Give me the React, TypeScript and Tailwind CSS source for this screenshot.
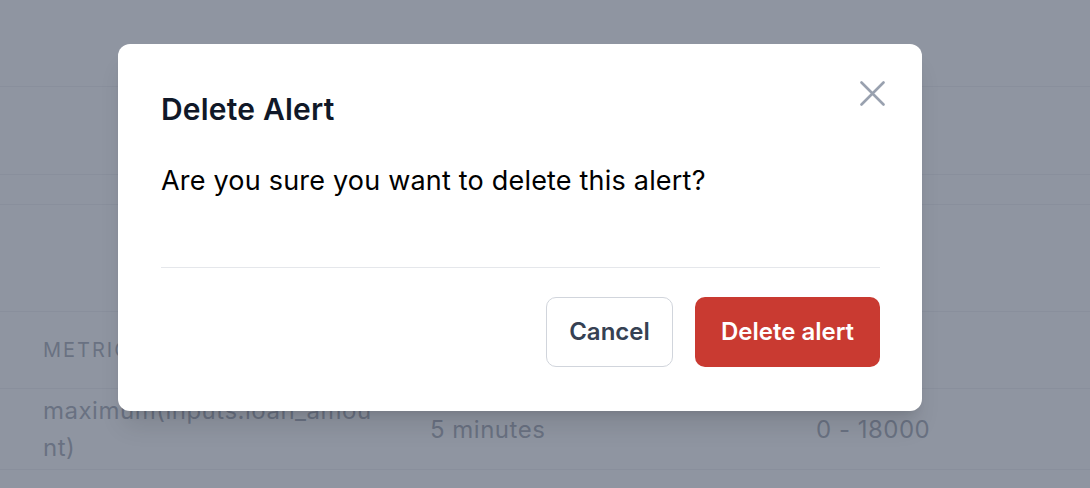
function BackgroundPage() {
  return (
    <div className="flex flex-col">
      <div className="h-[87px] border-b border-gray-200" />
      <div className="h-[88px] border-b border-gray-200" />
      <div className="h-[30px] border-b border-gray-200" />
      <div className="h-[107px] border-b border-gray-200" />
      <div className="h-[77px] border-b border-gray-200 flex items-center px-[43px]">
        <span className="text-[20px] uppercase tracking-[0.1em] text-gray-500">Metric</span>
      </div>
      <div className="h-[81px] border-b border-gray-200 flex items-center px-[43px] text-[24px] leading-[37px] tracking-[0.5px] text-gray-500">
        <div className="w-[387px] pr-[54px] break-all">maximum(inputs.loan_amount)</div>
        <div className="w-[386px]">5 minutes</div>
        <div>0 - 18000</div>
      </div>
    </div>
  );
}

function DeleteAlertDialog() {
  return (
    <div className="absolute left-[118px] top-[44px] w-[804px] rounded-[12px] bg-white pl-[43px] pr-[42px] pt-[47px] pb-[44px] shadow-xl">
      <button className="absolute right-[37px] top-[37px] text-gray-400" aria-label="Close">
        <svg width="25" height="25" viewBox="0 0 25 25" fill="none" stroke="currentColor" strokeWidth="2.6" strokeLinecap="round">
          <path d="M1.5 1.5l22 22M23.5 1.5l-22 22" />
        </svg>
      </button>
      <h2 className="text-[30px] font-semibold leading-[36px] tracking-[0.2px] text-gray-900">Delete Alert</h2>
      <p className="mt-[34px] text-[27px] leading-[40px] tracking-[0.2px] text-black">Are you sure you want to delete this alert?</p>
      <div className="mt-[66px] border-t border-gray-200" />
      <div className="mt-[29px] flex justify-end gap-[22px]">
        <button className="h-[70px] w-[127px] rounded-[10px] border border-gray-300 bg-white text-[24px] font-semibold text-gray-700">
          Cancel
        </button>
        <button className="h-[70px] w-[185px] rounded-[10px] bg-[#c93a31] text-[24px] font-semibold text-white">
          Delete alert
        </button>
      </div>
    </div>
  );
}

export default function App() {
  return (
    <div className="relative h-[488px] w-[1090px] overflow-hidden bg-white font-['Inter',sans-serif]">
      <BackgroundPage />
      <div className="absolute inset-0 bg-gray-500/75" />
      <DeleteAlertDialog />
    </div>
  );
}
